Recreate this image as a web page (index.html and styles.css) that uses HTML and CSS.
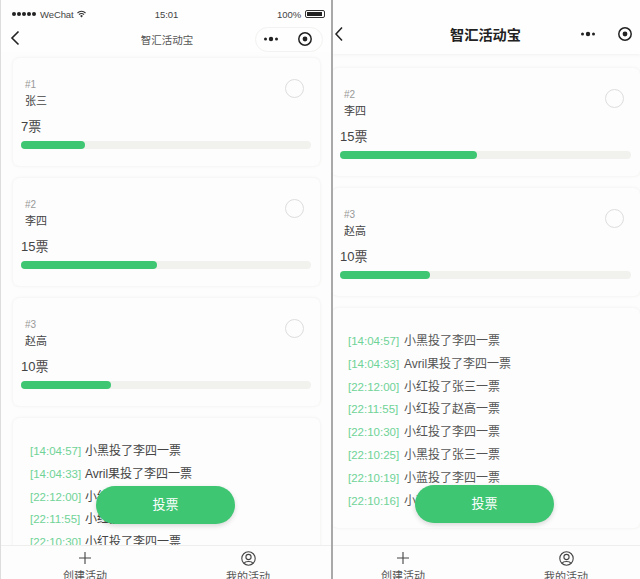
FILE: index.html
```html
<!doctype html>
<html lang="en">
    <head>
        <meta charset="UTF-8" />
        <title>智汇活动宝</title>
        <link rel="stylesheet" href="styles.css">
    </head>
    <body>
        <div class="screen">
            <div class="phone phone-left">
                <div class="status-bar">
                    <div class="status-side">
                        <span class="signal"><i></i><i></i><i></i><i></i><i></i></span>
                        <span>WeChat</span>
                        <svg class="wifi" width="9" height="8" viewBox="0 0 9 8"><path d="M.5 3a5.6 5.6 0 0 1 8 0M2 4.6a3.4 3.4 0 0 1 5 0" fill="none" stroke="#333" stroke-width="1.1"/><path d="M3.2 5.9a1.6 1.6 0 0 1 2.6 0L4.5 7.4z" fill="#333"/></svg>
                    </div>
                    <div class="status-time">15:01</div>
                    <div class="status-side status-right">
                        <span>100%</span>
                        <span class="battery"><i></i></span>
                    </div>
                </div>
                <div class="nav">
                    <svg class="back" width="10" height="16" viewBox="0 0 10 16"><path d="M8.5 1.5 2 8l6.5 6.5" fill="none" stroke="#222" stroke-width="1.6"/></svg>
                    <div class="nav-title">智汇活动宝</div>
                    <div class="capsule">
                        <svg width="16" height="6" viewBox="0 0 16 6"><circle cx="2.5" cy="3" r="1.5"/><circle cx="8" cy="3" r="2.2"/><circle cx="13.5" cy="3" r="1.5"/></svg>
                        <svg width="16" height="16" viewBox="0 0 16 16"><circle cx="8" cy="8" r="6.2" fill="none" stroke="#222" stroke-width="1.5"/><circle cx="8" cy="8" r="2.4" fill="#222"/></svg>
                    </div>
                </div>
                <div class="content">
                    <div class="card">
                        <div class="radio"></div>
                        <div class="num">#1</div>
                        <div class="name">张三</div>
                        <div class="votes">7票</div>
                        <div class="bar"><div class="bar-fill" style="width: 22%"></div></div>
                    </div>
                    <div class="card">
                        <div class="radio"></div>
                        <div class="num">#2</div>
                        <div class="name">李四</div>
                        <div class="votes">15票</div>
                        <div class="bar"><div class="bar-fill" style="width: 47%"></div></div>
                    </div>
                    <div class="card">
                        <div class="radio"></div>
                        <div class="num">#3</div>
                        <div class="name">赵高</div>
                        <div class="votes">10票</div>
                        <div class="bar"><div class="bar-fill" style="width: 31%"></div></div>
                    </div>
                    <div class="card log">
                        <div class="log-row"><span class="log-time">[14:04:57]</span>小黑投了李四一票</div>
                        <div class="log-row"><span class="log-time">[14:04:33]</span>Avril果投了李四一票</div>
                        <div class="log-row"><span class="log-time">[22:12:00]</span>小红投了张三一票</div>
                        <div class="log-row"><span class="log-time">[22:11:55]</span>小红投了赵高一票</div>
                        <div class="log-row"><span class="log-time">[22:10:30]</span>小红投了李四一票</div>
                    </div>
                </div>
                <div class="vote-btn">投票</div>
                <div class="tabbar">
                    <div class="tab">
                        <svg width="14" height="14" viewBox="0 0 14 14"><path d="M7 1v12M1 7h12" stroke="#444" stroke-width="1.1"/></svg>
                        <span>创建活动</span>
                    </div>
                    <div class="tab">
                        <svg width="15" height="15" viewBox="0 0 15 15"><circle cx="7.5" cy="7.5" r="6.7" fill="none" stroke="#444" stroke-width="1.1"/><circle cx="7.5" cy="6" r="2.6" fill="none" stroke="#444" stroke-width="1.1"/><path d="M3.2 12.2c1-2.3 7.6-2.3 8.6 0" fill="none" stroke="#444" stroke-width="1.1"/></svg>
                        <span>我的活动</span>
                    </div>
                </div>
            </div>

            <div class="phone phone-right">
                <div class="nav">
                    <svg class="back" width="10" height="16" viewBox="0 0 10 16"><path d="M8 1.5 2 8l6 6.5" fill="none" stroke="#222" stroke-width="1.5"/></svg>
                    <div class="nav-title">智汇活动宝</div>
                    <div class="capsule">
                        <svg width="16" height="6" viewBox="0 0 16 6"><circle cx="2.5" cy="3" r="1.5"/><circle cx="8" cy="3" r="2.2"/><circle cx="13.5" cy="3" r="1.5"/></svg>
                        <svg width="16" height="16" viewBox="0 0 16 16"><circle cx="8" cy="8" r="6.2" fill="none" stroke="#222" stroke-width="1.5"/><circle cx="8" cy="8" r="2.4" fill="#222"/></svg>
                    </div>
                </div>
                <div class="content">
                    <div class="card">
                        <div class="radio"></div>
                        <div class="num">#2</div>
                        <div class="name">李四</div>
                        <div class="votes">15票</div>
                        <div class="bar"><div class="bar-fill" style="width: 47%"></div></div>
                    </div>
                    <div class="card">
                        <div class="radio"></div>
                        <div class="num">#3</div>
                        <div class="name">赵高</div>
                        <div class="votes">10票</div>
                        <div class="bar"><div class="bar-fill" style="width: 31%"></div></div>
                    </div>
                    <div class="card log">
                        <div class="log-row"><span class="log-time">[14:04:57]</span>小黑投了李四一票</div>
                        <div class="log-row"><span class="log-time">[14:04:33]</span>Avril果投了李四一票</div>
                        <div class="log-row"><span class="log-time">[22:12:00]</span>小红投了张三一票</div>
                        <div class="log-row"><span class="log-time">[22:11:55]</span>小红投了赵高一票</div>
                        <div class="log-row"><span class="log-time">[22:10:30]</span>小红投了李四一票</div>
                        <div class="log-row"><span class="log-time">[22:10:25]</span>小黑投了张三一票</div>
                        <div class="log-row"><span class="log-time">[22:10:19]</span>小蓝投了李四一票</div>
                        <div class="log-row"><span class="log-time">[22:10:16]</span>小蓝投了张三一票</div>
                    </div>
                </div>
                <div class="vote-btn">投票</div>
                <div class="tabbar">
                    <div class="tab">
                        <svg width="14" height="14" viewBox="0 0 14 14"><path d="M7 1v12M1 7h12" stroke="#444" stroke-width="1.1"/></svg>
                        <span>创建活动</span>
                    </div>
                    <div class="tab">
                        <svg width="15" height="15" viewBox="0 0 15 15"><circle cx="7.5" cy="7.5" r="6.7" fill="none" stroke="#444" stroke-width="1.1"/><circle cx="7.5" cy="6" r="2.6" fill="none" stroke="#444" stroke-width="1.1"/><path d="M3.2 12.2c1-2.3 7.6-2.3 8.6 0" fill="none" stroke="#444" stroke-width="1.1"/></svg>
                        <span>我的活动</span>
                    </div>
                </div>
            </div>
        </div>
    </body>
</html>
```

FILE: styles.css
```css
* {
    margin: 0;
    padding: 0;
    box-sizing: border-box;
}

body {
    font-family: "Liberation Sans", "Noto Sans CJK SC", sans-serif;
    background: #fdfdfd;
    color: #444;
    overflow: hidden;
}

.screen {
    display: flex;
    width: 640px;
    height: 579px;
}

.phone {
    position: relative;
    display: flex;
    flex-direction: column;
    height: 579px;
    overflow: hidden;
    background: #fdfdfd;
}

.phone-left {
    width: 331px;
    border-left: 1px solid #ddd;
}

.phone-right {
    width: 309px;
    border-left: 2px solid #a9a9a9;
}

/* status bar, left phone only */
.status-bar {
    display: grid;
    grid-template-columns: 1fr auto 1fr;
    align-items: center;
    height: 26px;
    padding: 2px 6px 0 11px;
    font-size: 9.5px;
    letter-spacing: -0.1px;
    color: #444;
    background: #fefefe;
}

.status-time {
    margin-right: 4px;
}

.status-side {
    display: flex;
    align-items: center;
    gap: 3px;
}

.status-right {
    justify-content: flex-end;
    gap: 4px;
}

.signal {
    display: flex;
    gap: 1px;
    margin-right: 1px;
}

.signal i {
    width: 4px;
    height: 4px;
    border-radius: 50%;
    background: #222;
}

.battery {
    display: block;
    width: 20px;
    height: 8px;
    padding: 1px 2px 1px 1px;
    border: 1px solid #333;
    border-radius: 2px;
}

.battery i {
    display: block;
    height: 100%;
    background: #222;
}

.nav {
    display: grid;
    grid-template-columns: 1fr auto 1fr;
    align-items: center;
    flex: none;
    background: #fefefe;
    z-index: 2;
}

.phone-left .nav {
    height: 26px;
    padding: 0 8px 0 10px;
    font-size: 10.5px;
}

.phone-right .nav {
    height: 54px;
    padding: 13px 4px 0 2px;
    box-shadow: 0 1px 3px rgba(90, 100, 80, 0.08);
}

.phone-left .back {
    margin: 0 0 2px -1px;
}

.phone-right .back {
    margin-left: -1px;
}

.back {
    justify-self: start;
}

.nav-title {
    color: #555;
}

.phone-right .nav-title {
    font-size: 14.2px;
    font-weight: 700;
    color: #222;
}

.capsule {
    justify-self: end;
    display: flex;
    align-items: center;
    justify-content: space-between;
    width: 68px;
    height: 25px;
    padding: 0 9px 0 7px;
    border: 1px solid #f2f2f0;
    border-radius: 13px;
    fill: #222;
}

.phone-right .capsule {
    border-color: transparent;
    width: 68px;
    padding: 0 2px 0 11px;
}

.content {
    flex: 1;
    min-height: 0;
    overflow: hidden;
}

.phone-left .content {
    padding: 6px 11px 0 12px;
}

.phone-right .content {
    padding: 14px 0 0 0;
    margin-left: -1px;
}

.card {
    position: relative;
    height: 108px;
    margin-bottom: 12px;
    padding: 20px 9px 0 8px;
    background: #fdfdfd;
    border-radius: 6px;
    box-shadow: 0 0 3px rgba(120, 130, 105, 0.14);
}

.radio {
    position: absolute;
    top: 21px;
    right: 16px;
    width: 19px;
    height: 19px;
    border: 1px solid #ddd;
    border-radius: 50%;
}

.num {
    padding-left: 4px;
    font-size: 10px;
    line-height: 14px;
    color: #999;
}

.name {
    padding-left: 4px;
    font-size: 11px;
    line-height: 18px;
    color: #444;
}

.votes {
    margin-top: 8px;
    font-size: 13px;
    line-height: 18px;
    color: #444;
}

.bar {
    height: 8px;
    margin-top: 5px;
    border-radius: 4px;
    background: #f1f2ee;
}

.bar-fill {
    height: 100%;
    border-radius: 4px;
    background: #3ec673;
}

.log {
    height: auto;
    padding: 22px 0 16px 17px;
}

.log-row {
    font-size: 12px;
    line-height: 22.8px;
    white-space: nowrap;
    color: #444;
}

.phone-right .log {
    padding-left: 16px;
}

.phone-right .log-row {
    color: #555;
}

.log-time {
    display: inline-block;
    width: 55px;
    font-size: 11.5px;
    color: #6fd397;
}

.phone-right .log-time {
    width: 56px;
}

.vote-btn {
    position: absolute;
    width: 139px;
    height: 38px;
    border-radius: 19px;
    background: #3ec673;
    box-shadow: 0 2px 5px rgba(0, 0, 0, 0.15);
    color: #fff;
    font-size: 13px;
    line-height: 38px;
    text-align: center;
    z-index: 3;
}

.phone-left .vote-btn {
    left: 95px;
    top: 486px;
}

.phone-right .vote-btn {
    left: 82px;
    top: 485px;
}

.tabbar {
    display: flex;
    gap: 63px;
    flex: none;
    height: 34px;
    padding-top: 5px;
    background: #fdfdfd;
    border-top: 1px solid #eeeeec;
    z-index: 2;
}

.phone-left .tabbar {
    padding-left: 34px;
}

.phone-right .tabbar {
    padding-left: 20px;
}

.tab {
    display: flex;
    flex-direction: column;
    align-items: center;
    gap: 4px;
    flex: none;
    width: 100px;
    font-size: 11px;
    line-height: 14px;
    color: #555;
}

.tab svg {
    flex: none;
}
```
